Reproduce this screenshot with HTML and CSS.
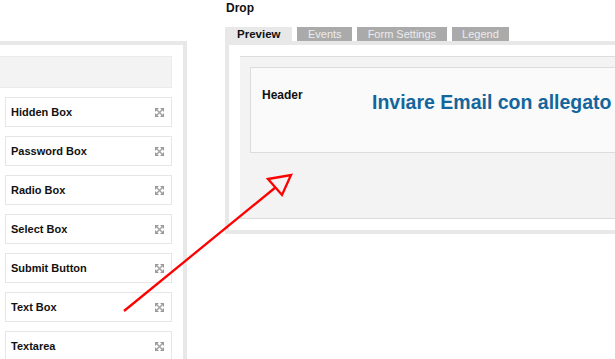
FILE: index.html
```html
<!DOCTYPE html>
<html>
<head>
<meta charset="utf-8">
<link rel="stylesheet" href="styles.css">
</head>
<body>
<div class="page">
  <div class="toolbox">
    <div class="toolbox-head"></div>
    <div class="tool"><span>Hidden Box</span><svg class="move" viewBox="0 0 9 9"><path d="M0 0h4L0 4zM9 0v4L5 0zM0 9V5l4 4zM9 9H5l4-4z" fill="#9a9a9a"/><path d="M1.5 1.5l6 6M7.5 1.5l-6 6" stroke="#a8a8a8" stroke-width="1.6"/></svg></div>
    <div class="tool"><span>Password Box</span><svg class="move" viewBox="0 0 9 9"><path d="M0 0h4L0 4zM9 0v4L5 0zM0 9V5l4 4zM9 9H5l4-4z" fill="#9a9a9a"/><path d="M1.5 1.5l6 6M7.5 1.5l-6 6" stroke="#a8a8a8" stroke-width="1.6"/></svg></div>
    <div class="tool"><span>Radio Box</span><svg class="move" viewBox="0 0 9 9"><path d="M0 0h4L0 4zM9 0v4L5 0zM0 9V5l4 4zM9 9H5l4-4z" fill="#9a9a9a"/><path d="M1.5 1.5l6 6M7.5 1.5l-6 6" stroke="#a8a8a8" stroke-width="1.6"/></svg></div>
    <div class="tool"><span>Select Box</span><svg class="move" viewBox="0 0 9 9"><path d="M0 0h4L0 4zM9 0v4L5 0zM0 9V5l4 4zM9 9H5l4-4z" fill="#9a9a9a"/><path d="M1.5 1.5l6 6M7.5 1.5l-6 6" stroke="#a8a8a8" stroke-width="1.6"/></svg></div>
    <div class="tool"><span>Submit Button</span><svg class="move" viewBox="0 0 9 9"><path d="M0 0h4L0 4zM9 0v4L5 0zM0 9V5l4 4zM9 9H5l4-4z" fill="#9a9a9a"/><path d="M1.5 1.5l6 6M7.5 1.5l-6 6" stroke="#a8a8a8" stroke-width="1.6"/></svg></div>
    <div class="tool"><span>Text Box</span><svg class="move" viewBox="0 0 9 9"><path d="M0 0h4L0 4zM9 0v4L5 0zM0 9V5l4 4zM9 9H5l4-4z" fill="#9a9a9a"/><path d="M1.5 1.5l6 6M7.5 1.5l-6 6" stroke="#a8a8a8" stroke-width="1.6"/></svg></div>
    <div class="tool"><span>Textarea</span><svg class="move" viewBox="0 0 9 9"><path d="M0 0h4L0 4zM9 0v4L5 0zM0 9V5l4 4zM9 9H5l4-4z" fill="#9a9a9a"/><path d="M1.5 1.5l6 6M7.5 1.5l-6 6" stroke="#a8a8a8" stroke-width="1.6"/></svg></div>
  </div>
  <div class="drop">
    <div class="drop-title">Drop</div>
    <div class="tabs">
      <div class="tab active">Preview</div>
      <div class="tab">Events</div>
      <div class="tab">Form Settings</div>
      <div class="tab">Legend</div>
    </div>
    <div class="panel">
      <div class="canvas">
        <div class="header-box">
          <div class="header-label">Header</div>
          <div class="header-title">Inviare Email con allegato</div>
        </div>
      </div>
    </div>
  </div>
</div>
<svg class="arrow" width="615" height="359" viewBox="0 0 615 359">
  <line x1="124" y1="311" x2="276" y2="187" stroke="#f00" stroke-width="2.3"/>
  <polygon points="268,179 291,175 282,195" fill="none" stroke="#f00" stroke-width="2.3" stroke-linejoin="miter"/>
</svg>
</body>
</html>
```

FILE: styles.css
```css
html, body {
  margin: 0;
  padding: 0;
  overflow: hidden;
  height: 359px;
  background: #fff;
}
body {
  font-family: "Liberation Sans", Arial, sans-serif;
  color: #111;
  position: relative;
}
.page {
  display: flex;
  align-items: flex-start;
}
.toolbox {
  flex: none;
  box-sizing: border-box;
  width: 197px;
  margin-left: -10px;
  margin-top: 41px;
  border: 4px solid #e8e8e8;
  border-bottom: none;
  padding: 11px 11px 0 11px;
  height: 400px;
}
.toolbox-head {
  box-sizing: border-box;
  height: 32px;
  margin-left: -30px;
  margin-bottom: 9px;
  background: #f3f3f3;
  border: 1px solid #ebebeb;
}
.tool {
  box-sizing: border-box;
  height: 30px;
  margin-bottom: 9px;
  border: 1px solid #e6e6e6;
  background: #fff;
  padding: 0 7px 0 5px;
  display: flex;
  align-items: center;
  justify-content: space-between;
  font-size: 11px;
  font-weight: bold;
  line-height: 13px;
}
.move {
  width: 9px;
  height: 9px;
  flex: none;
}
.drop {
  flex: none;
  width: 430px;
  margin-left: 38px;
}
.drop-title {
  font-size: 12px;
  font-weight: bold;
  line-height: 14px;
  margin: 1px 0 0 1px;
}
.tabs {
  display: flex;
  gap: 5px;
  margin-top: 12px;
}
.tab {
  height: 14px;
  line-height: 14px;
  font-size: 11px;
  padding: 0 10.5px;
  background: #aaa;
  color: #ececec;
}
.tab.active {
  background: #e8e8e8;
  color: #111;
  font-weight: bold;
  font-size: 11.5px;
  padding: 0 12px;
}
.panel {
  border: 4px solid #e8e8e8;
  border-right: none;
  padding: 11px 0 11px 11px;
}
.canvas {
  box-sizing: border-box;
  height: 163px;
  background: #f3f3f3;
  border: 1px solid #dcdcdc;
  border-left: none;
  border-right: none;
  padding: 10px 0 0 10px;
}
.header-box {
  box-sizing: border-box;
  height: 86px;
  background: #fafafa;
  border: 1px solid #dcdcdc;
  border-right: none;
  padding: 20px 0 0 11px;
  display: flex;
  align-items: flex-start;
}
.header-label {
  width: 110px;
  flex: none;
  font-size: 12px;
  font-weight: bold;
  line-height: 14px;
}
.header-title {
  flex: none;
  white-space: nowrap;
  margin-top: 3px;
  font-size: 19.5px;
  line-height: 22px;
  font-weight: bold;
  color: #15659d;
}
.arrow {
  position: absolute;
  left: 0;
  top: 0;
  pointer-events: none;
}
```
